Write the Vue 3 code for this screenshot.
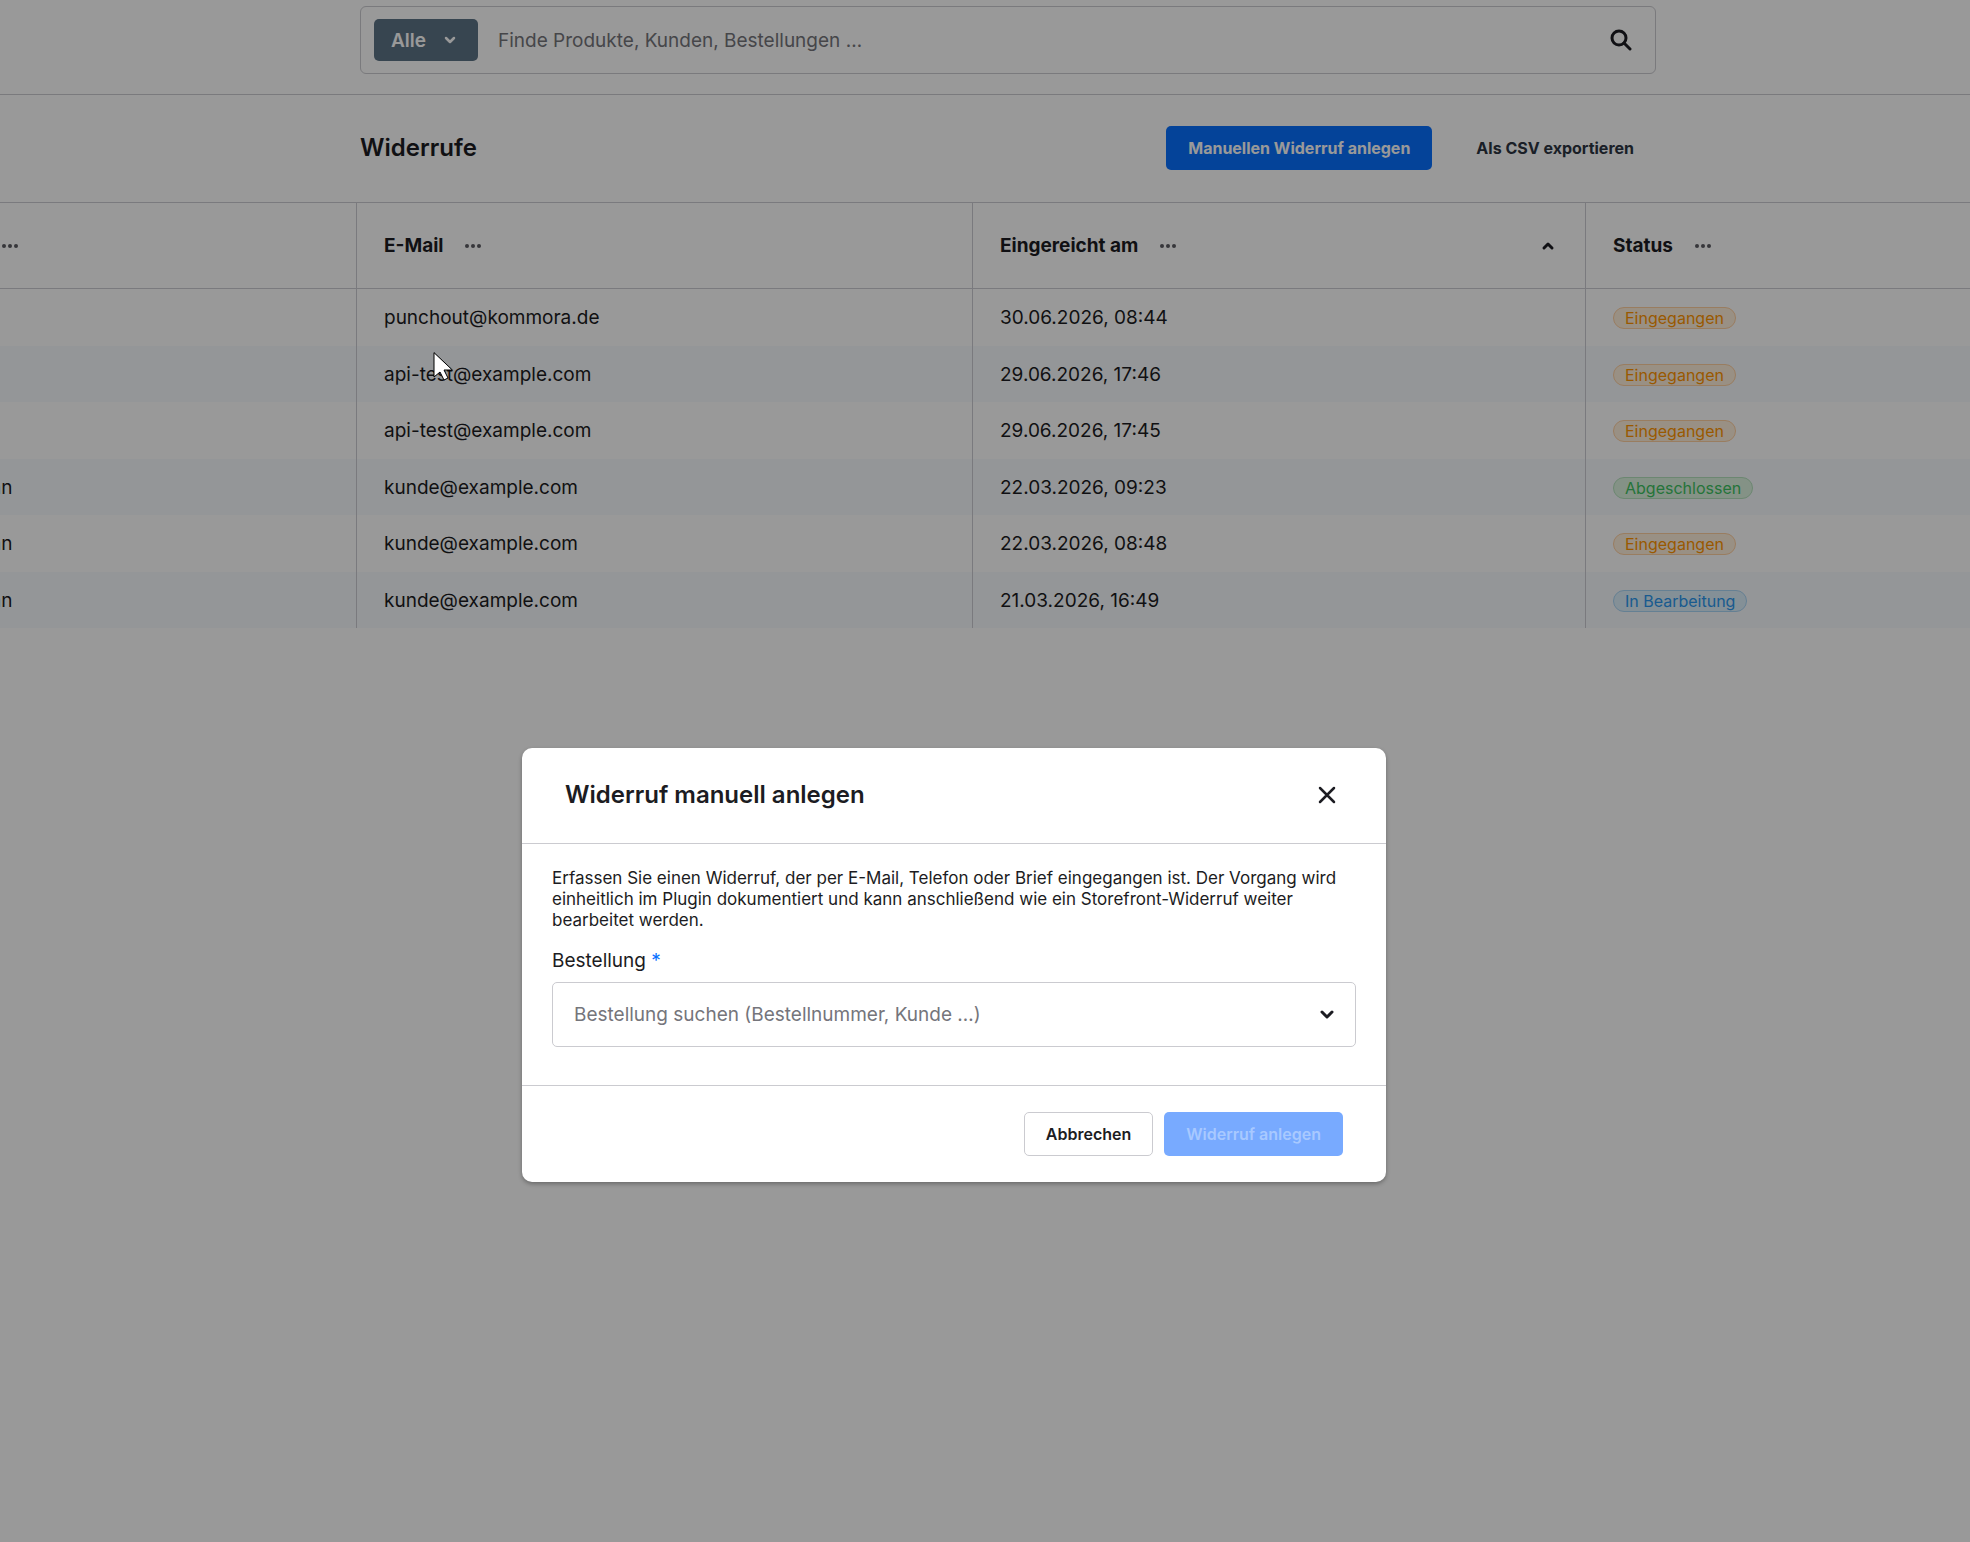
<script setup>
import { ref } from 'vue'

const search = ref('')
const order = ref('')

const columns = [
  { key: 'name', label: '' },
  { key: 'mail', label: 'E-Mail' },
  { key: 'date', label: 'Eingereicht am', sorted: true },
  { key: 'status', label: 'Status' },
]

const rows = [
  { name: '', mail: 'punchout@kommora.de', date: '30.06.2026, 08:44', status: 'Eingegangen', tone: 'warning' },
  { name: '', mail: 'api-test@example.com', date: '29.06.2026, 17:46', status: 'Eingegangen', tone: 'warning' },
  { name: '', mail: 'api-test@example.com', date: '29.06.2026, 17:45', status: 'Eingegangen', tone: 'warning' },
  { name: 'nn', mail: 'kunde@example.com', date: '22.03.2026, 09:23', status: 'Abgeschlossen', tone: 'success' },
  { name: 'nn', mail: 'kunde@example.com', date: '22.03.2026, 08:48', status: 'Eingegangen', tone: 'warning' },
  { name: 'nn', mail: 'kunde@example.com', date: '21.03.2026, 16:49', status: 'In Bearbeitung', tone: 'info' },
]
</script>

<template>
  <div class="admin">
    <header class="topbar">
      <form class="search" role="search" @submit.prevent>
        <button class="scope" type="button">
          Alle
          <svg width="12" height="8" viewBox="0 0 12 8" aria-hidden="true"><path d="M2 2l4 4 4-4" /></svg>
        </button>
        <input v-model="search" class="search-input" type="text" aria-label="Suche" placeholder="Finde Produkte, Kunden, Bestellungen …" />
        <button class="icon-button" type="submit" aria-label="Suchen">
          <svg width="22" height="22" viewBox="0 0 22 22" aria-hidden="true"><circle cx="9" cy="9" r="7" /><path d="M14 14l6 6" /></svg>
        </button>
      </form>
    </header>

    <div class="page-head">
      <h1>Widerrufe</h1>
      <div class="page-actions">
        <button class="btn primary" type="button">Manuellen Widerruf anlegen</button>
        <button class="btn plain" type="button">Als CSV exportieren</button>
      </div>
    </div>

    <main class="grid-wrap">
      <table class="grid">
        <colgroup>
          <col class="col-name" />
          <col class="col-mail" />
          <col class="col-date" />
          <col />
        </colgroup>
        <thead>
          <tr>
            <th v-for="c in columns" :key="c.key" :class="c.key" scope="col">
              <div class="th-inner">
                <span v-if="c.label">{{ c.label }}</span>
                <button class="dots" type="button" aria-label="Spaltenoptionen">
                  <svg width="18" height="6" viewBox="0 0 18 6" aria-hidden="true"><circle cx="3" cy="3" r="2" /><circle cx="9" cy="3" r="2" /><circle cx="15" cy="3" r="2" /></svg>
                </button>
                <svg v-if="c.sorted" class="sort" width="14" height="10" viewBox="0 0 14 10" aria-hidden="true"><path d="M3 7l4-4 4 4" /></svg>
              </div>
            </th>
          </tr>
        </thead>
        <tbody>
          <tr v-for="(r, i) in rows" :key="i">
            <td class="name">{{ r.name }}</td>
            <td>{{ r.mail }}</td>
            <td>{{ r.date }}</td>
            <td><span class="chip" :class="r.tone">{{ r.status }}</span></td>
          </tr>
        </tbody>
      </table>
    </main>

    <div class="backdrop">
      <section class="modal" role="dialog" aria-modal="true" aria-labelledby="modal-title">
        <header class="modal-head">
          <h2 id="modal-title">Widerruf manuell anlegen</h2>
          <button class="icon-button" type="button" aria-label="Schließen">
            <svg width="18" height="18" viewBox="0 0 18 18" aria-hidden="true"><path d="M2 2l14 14M16 2L2 16" /></svg>
          </button>
        </header>
        <div class="modal-body">
          <p>Erfassen Sie einen Widerruf, der per E-Mail, Telefon oder Brief eingegangen ist. Der Vorgang wird einheitlich im Plugin dokumentiert und kann anschließend wie ein Storefront-Widerruf weiter bearbeitet werden.</p>
          <label for="order">Bestellung <span class="required">*</span></label>
          <div class="combo">
            <input id="order" v-model="order" type="text" role="combobox" aria-expanded="false" placeholder="Bestellung suchen (Bestellnummer, Kunde …)" />
            <svg width="16" height="12" viewBox="0 0 16 12" aria-hidden="true"><path d="M3 3l5 5 5-5" /></svg>
          </div>
        </div>
        <footer class="modal-foot">
          <button class="btn outline" type="button">Abbrechen</button>
          <button class="btn primary" type="button" disabled>Widerruf anlegen</button>
        </footer>
      </section>
    </div>

    <svg class="pointer" width="22" height="34" viewBox="0 0 22 34" aria-hidden="true">
      <path d="M1 1v24l6-5 4 8 4-2-4-8h8z" />
    </svg>
  </div>
</template>

<style>
body {
  margin: 0;
}
</style>

<style scoped>
.admin {
  position: relative;
  box-sizing: border-box;
  min-height: 100vh;
  overflow: hidden;
  background: #fff;
  color: #1c1c22;
  font-family: Inter, "Liberation Sans", sans-serif;
  font-size: 19px;
}

button,
input {
  font: inherit;
  color: inherit;
}

button {
  padding: 0;
  border: 0;
  background: none;
}

svg {
  display: block;
  flex: none;
  fill: none;
  stroke: currentColor;
  stroke-width: 3;
  stroke-linecap: round;
  stroke-linejoin: round;
}

.topbar {
  padding: 6px 314px 20px 360px;
  border-bottom: 1px solid #cbcbd0;
}

.search {
  display: flex;
  align-items: center;
  box-sizing: border-box;
  height: 68px;
  padding: 0 23px 0 13px;
  border: 1px solid #cbcbd0;
  border-radius: 6px;
}

.scope {
  display: flex;
  align-items: center;
  gap: 18px;
  height: 42px;
  padding: 0 22px 0 17px;
  border-radius: 5px;
  background: #5d7385;
  color: #fff;
  font-weight: 600;
}

.scope svg {
  stroke-width: 2.5;
}

.search-input {
  flex: 1;
  min-width: 0;
  padding: 0 20px;
  border: 0;
  outline: 0;
  background: none;
}

input::placeholder {
  color: #75757b;
  opacity: 1;
}

.page-head {
  display: flex;
  align-items: center;
  justify-content: space-between;
  box-sizing: border-box;
  height: 107px;
  padding: 0 314px 2px 360px;
}

h1,
h2 {
  margin: 0;
  font-size: 24px;
  font-weight: 600;
  line-height: 32px;
}

.page-actions {
  display: flex;
  gap: 22px;
}

.btn {
  box-sizing: border-box;
  height: 44px;
  padding: 0 21px;
  border: 1px solid transparent;
  border-radius: 5px;
  font-size: 16px;
  font-weight: 600;
  white-space: nowrap;
}

.page-actions .btn {
  font-weight: 700;
}

.btn.primary {
  background: #0870ff;
  color: #fff;
}

.btn.primary:disabled {
  background: #78aaff;
  color: #a8c9ff;
}

.btn.plain {
  color: #2c3542;
}

.btn.outline {
  border-color: #cbcbd0;
  background: #fff;
}

.grid-wrap {
  margin-left: -32px;
}

.grid {
  width: 100%;
  table-layout: fixed;
  border-collapse: separate;
  border-spacing: 0;
  border-top: 1px solid #cbcbd2;
}

.col-name {
  width: 389px;
}

.col-mail {
  width: 616px;
}

.col-date {
  width: 613px;
}

th,
td {
  box-sizing: border-box;
  padding: 0 30px 0 27px;
  border-right: 1px solid #cbcbd2;
  text-align: left;
}

th:last-child,
td:last-child {
  border-right: 0;
}

th {
  height: 86px;
  border-bottom: 1px solid #cbcbd2;
  font-weight: 700;
}

th.name {
  padding-left: 33px;
}

.th-inner {
  display: flex;
  align-items: center;
}

.th-inner span {
  margin-right: 21px;
}

.dots svg {
  fill: #5c5c62;
  stroke: none;
}

.sort {
  margin-left: auto;
}

td {
  height: 57px;
}

tbody tr:nth-child(even) td {
  height: 56px;
}

td.name {
  padding-left: 22px;
}

tbody tr:nth-child(even) {
  background: #f7fafd;
}

.chip {
  display: inline-block;
  box-sizing: border-box;
  height: 22px;
  padding: 0 11px;
  border: 1px solid;
  border-radius: 11px;
  font-size: 16px;
  line-height: 20px;
  vertical-align: middle;
}

.warning {
  border-color: #ffd0a0;
  background: #fff0dc;
  color: #ff9500;
}

.success {
  border-color: #b4e2bc;
  background: #dcf3e0;
  color: #3cc261;
}

.info {
  border-color: #a9d5f5;
  background: #dcf0fc;
  color: #2a97ee;
}

.backdrop {
  position: absolute;
  inset: 0;
  display: flex;
  align-items: flex-start;
  justify-content: center;
  box-sizing: border-box;
  padding: 748px 62px 0 0;
  background: rgba(0, 0, 0, 0.4);
}

.modal {
  width: 864px;
  max-width: 100%;
  border-radius: 10px;
  background: #fff;
  box-shadow: 0 2px 4px rgba(0, 0, 0, 0.3);
}

.modal-head {
  display: flex;
  align-items: center;
  justify-content: space-between;
  box-sizing: border-box;
  height: 96px;
  padding: 0 50px 1px 43px;
  border-bottom: 1px solid #cbcbd0;
}

.modal-head svg {
  stroke-width: 2.5;
}

.modal-body {
  padding: 24px 30px 38px;
}

p {
  margin: 0 0 16px;
  font-size: 17px;
  line-height: 21px;
}

label {
  display: block;
  margin-bottom: 7px;
  line-height: 28px;
}

.required {
  color: #0870ff;
}

.combo {
  display: flex;
  align-items: center;
  box-sizing: border-box;
  height: 65px;
  padding: 0 20px 0 21px;
  border: 1px solid #cbcbd0;
  border-radius: 5px;
}

.combo input {
  flex: 1;
  min-width: 0;
  padding: 0;
  border: 0;
  outline: 0;
  background: none;
}

.modal-foot {
  display: flex;
  justify-content: flex-end;
  gap: 11px;
  padding: 26px 43px;
  border-top: 1px solid #cbcbd0;
}

.pointer {
  position: absolute;
  left: 433px;
  top: 352px;
}

.pointer path {
  fill: #fff;
  stroke: #000;
  stroke-width: 1;
  stroke-linejoin: miter;
}
</style>
